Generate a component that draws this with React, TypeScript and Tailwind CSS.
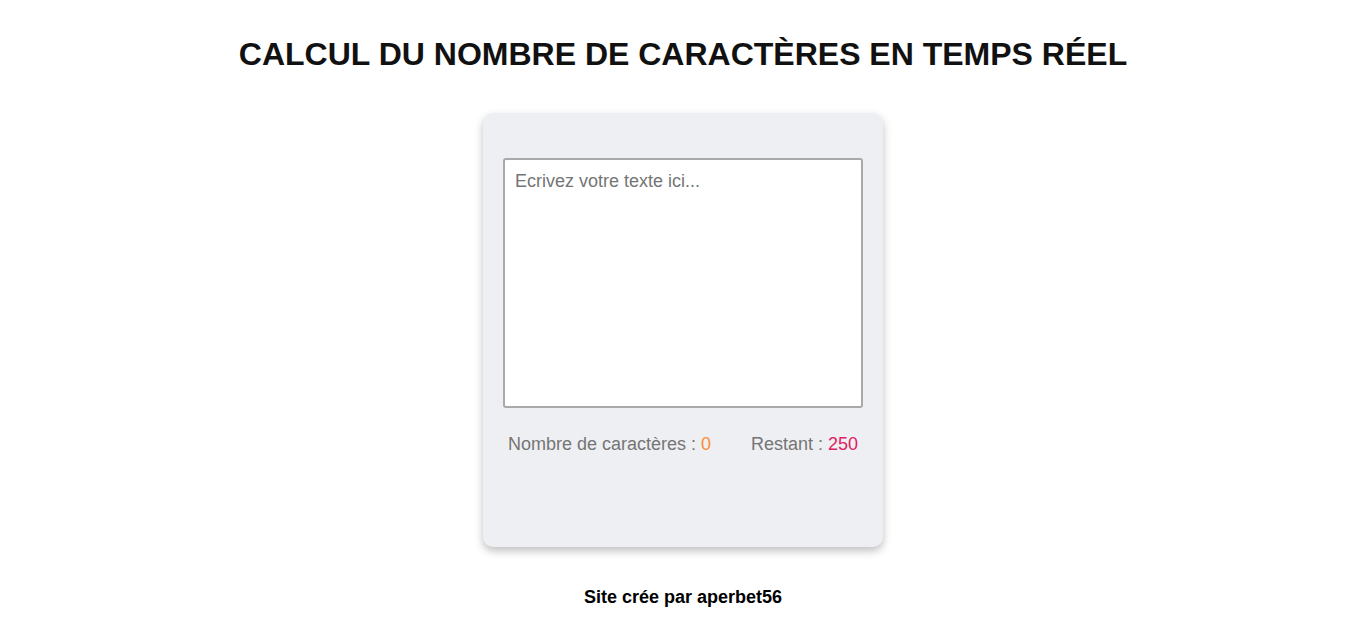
import React, { useState } from 'react';

const MAX = 250;

export default function App() {
  const [text, setText] = useState('');

  return (
    <div className="min-h-screen bg-white flex flex-col items-center font-['Liberation_Sans',Arial,sans-serif]">
      <h1 className="mt-[36px] text-[32px] leading-[37px] font-bold text-[#111]">
        CALCUL DU NOMBRE DE CARACTÈRES EN TEMPS RÉEL
      </h1>

      {/* Counter card */}
      <div className="mt-[40px] w-[400px] h-[434px] bg-[#eeeff3] rounded-[10px] shadow-[0_4px_8px_rgba(0,0,0,0.25)] px-[20px] pt-[45px]">
        <textarea
          value={text}
          maxLength={MAX}
          onChange={(e) => setText(e.target.value)}
          placeholder="Ecrivez votre texte ici..."
          className="block w-[360px] h-[250px] resize-none bg-white border-2 border-[#a9a9a9] rounded-[3px] px-[10px] pt-[8px] pb-[10px] text-[18px] text-[#333] placeholder:text-[#757575] outline-none"
        />
        <div className="flex justify-between px-[5px] mt-[23px] text-[18px] text-[#757575]">
          <span>
            Nombre de caractères : <span className="text-[#fd8b36]">{text.length}</span>
          </span>
          <span>
            Restant : <span className="text-[#e1215f]">{MAX - text.length}</span>
          </span>
        </div>
      </div>

      <p className="mt-[40px] text-[18px] leading-[21px] font-bold text-black">Site crée par aperbet56</p>
    </div>
  );
}
